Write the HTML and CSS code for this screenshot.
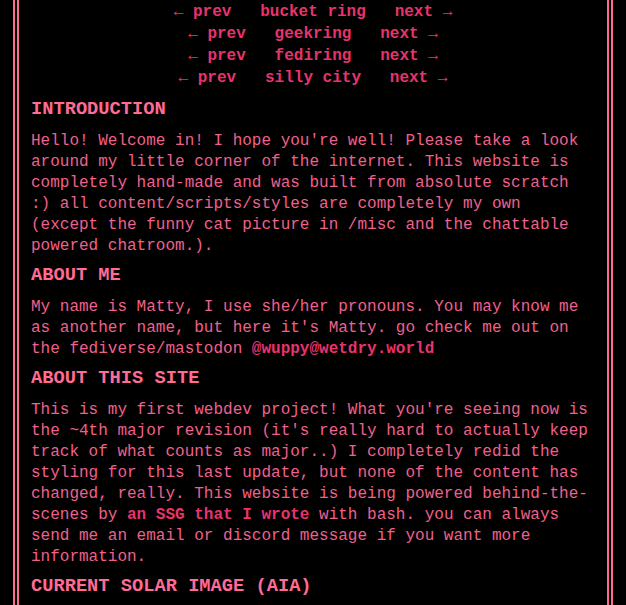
FILE: index.html
```html
<!DOCTYPE html>
<html lang="en">
<head>
<meta charset="utf-8">
<title>Matty</title>
<link rel="stylesheet" href="styles.css">
</head>
<body>
<main class="page">
  <nav class="rings">
    <div class="ring"><a href="#">← prev</a>   <a href="#">bucket ring</a>   <a href="#">next →</a></div>
    <div class="ring"><a href="#">← prev</a>   <a href="#">geekring</a>   <a href="#">next →</a></div>
    <div class="ring"><a href="#">← prev</a>   <a href="#">fediring</a>   <a href="#">next →</a></div>
    <div class="ring"><a href="#">← prev</a>   <a href="#">silly city</a>   <a href="#">next →</a></div>
  </nav>
  <h3 class="heading">INTRODUCTION</h3>
  <p class="text">Hello! Welcome in! I hope you're well! Please take a look around my little corner of the internet. This website is completely hand-made and was built from absolute scratch :) all content/scripts/styles are completely my own (except the funny cat picture in /misc and the chattable powered chatroom.).</p>
  <h3 class="heading">ABOUT ME</h3>
  <p class="text">My name is Matty, I use she/her pronouns. You may know me as another name, but here it's Matty. go check me out on the fediverse/mastodon <a class="link" href="#">@wuppy@wetdry.world</a></p>
  <h3 class="heading">ABOUT THIS SITE</h3>
  <p class="text">This is my first webdev project! What you're seeing now is the ~4th major revision (it's really hard to actually keep track of what counts as major..) I completely redid the styling for this last update, but none of the content has changed, really. This website is being powered behind-the-scenes by <a class="link" href="#">an SSG that I wrote</a> with bash. you can always send me an email or discord message if you want more information.</p>
  <h3 class="heading">CURRENT SOLAR IMAGE (AIA)</h3>
</main>
</body>
</html>
```
FILE: styles.css
```css
html, body {
  margin: 0;
  padding: 0;
  background: #000;
}
body {
  font-family: "Liberation Mono", "DejaVu Sans Mono", monospace;
  font-size: 16px;
  color: #f0608c;
  height: 605px;
  overflow: hidden;
}
.page {
  width: 600px;
  box-sizing: border-box;
  margin: 0 auto;
  min-height: 605px;
  border-left: 6px double #ff6b93;
  border-right: 6px double #ff6b93;
  padding: 1px 12px 0;
}
.rings {
  text-align: center;
  font-weight: bold;
  line-height: 22px;
  margin-bottom: 8px;
}
.ring {
  white-space: pre;
}
.ring a {
  color: #e8336d;
  text-decoration: none;
}
.heading {
  margin: 0;
  font-size: 1.17em;
  line-height: 24px;
  font-weight: bold;
  color: #ff6b93;
}
.text {
  margin: 10px 0 6px;
  line-height: 21px;
}
.link {
  color: #e8336d;
  font-weight: bold;
  text-decoration: none;
}
```
